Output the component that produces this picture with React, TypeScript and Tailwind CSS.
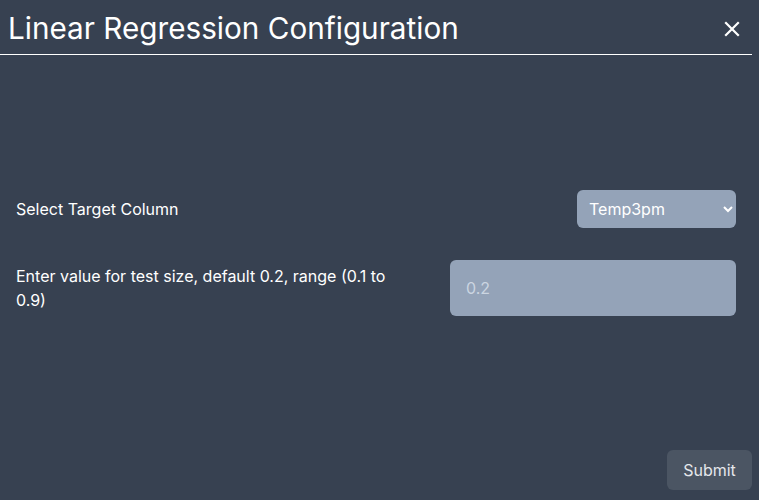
import React from "react";

export default function App() {
  return (
    <div
      className="h-[500px] w-full bg-[#374151] text-white"
      style={{ fontFamily: "Inter, 'Noto Sans', sans-serif" }}
    >
      <div className="flex h-full w-[752px] flex-col">
        {/* Header */}
        <div className="flex h-[55px] items-center justify-between border-b border-white pl-2 pr-3 pt-[4px]">
          <h1 className="text-[29.7px] leading-none font-normal">
            Linear Regression Configuration
          </h1>
          <button className="text-white" aria-label="Close">
            <svg width="16" height="16" viewBox="0 0 16 16" fill="none" stroke="currentColor" strokeWidth="2.2" strokeLinecap="square">
              <path d="M2 2L14 14M14 2L2 14" />
            </svg>
          </button>
        </div>

        {/* Fields */}
        <div className="flex flex-col gap-8 px-4 pt-[135px]">
          <div className="flex items-center justify-between">
            <label className="text-base">Select Target Column</label>
            <select className="h-[38px] w-[159px] rounded-md bg-[#94a3b8] px-2 text-base text-white outline-none">
              <option>Temp3pm</option>
            </select>
          </div>
          <div className="flex items-center justify-between">
            <label className="w-[395px] text-base leading-6">
              Enter value for test size, default 0.2, range (0.1 to 0.9)
            </label>
            <input
              className="h-[56px] w-[286px] rounded-md bg-[#94a3b8] px-4 text-base text-white placeholder:text-[#cbd5e1] outline-none"
              placeholder="0.2"
            />
          </div>
        </div>

        {/* Footer */}
        <div className="mt-auto flex justify-end pb-[10px]">
          <button className="h-[40px] w-[85px] rounded-md bg-[#4b5563] text-base text-[#e5e7eb]">
            Submit
          </button>
        </div>
      </div>
    </div>
  );
}
